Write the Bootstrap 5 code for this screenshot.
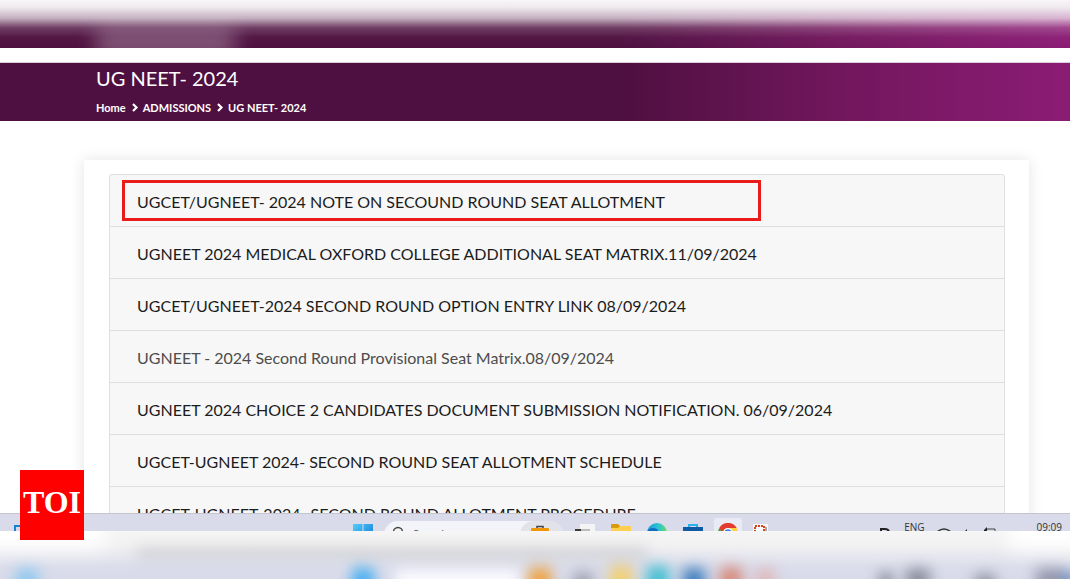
<!DOCTYPE html>
<html lang="en">
<head>
<meta charset="utf-8">
<meta name="viewport" content="width=device-width, initial-scale=1">
<title>UG NEET- 2024</title>
<link href="https://cdn.jsdelivr.net/npm/bootstrap@5.3.0/dist/css/bootstrap.min.css" rel="stylesheet">
<style>
  body { font-family: Lato, sans-serif; color: #1c1c1c; background: #fff; }
  .purple { background: linear-gradient(90deg, #4e1040 0%, #4e1040 58%, #74175f 80%, #8b1c74 100%); }
  .top-strip { height: 48px; }
  .top-strip .fade-down { background: linear-gradient(180deg, #f8f6f8 0, #efeaef 15%, #ffffffaa 38%, #ffffff30 58%, #ffffff08 78%, transparent 100%); }
  .smear { left: 9%; width: 13%; top: 28px; height: 32px; background: #ffffff48; filter: blur(10px); }
  .page-head { margin-top: 14px; padding: 3px 96px 5px; height: 59px; border-top: 1px solid #dccfd9; background-clip: padding-box; }
  .page-head h1 { font-size: 20px; line-height: 24px; }
  .crumbs { font-size: 11px; line-height: 16px; font-weight: 700; padding-top: 10px; gap: 3px; }
  .crumbs a, .crumbs span { color: #fff; text-decoration: none; }
  .content { min-height: 0; }
  .panel { margin: 39px 41px 0 84px; padding: 14px 24px 14px 25px; box-shadow: 0 0 14px #0000001c; background: #fff; }
  .notices { --bs-list-group-bg: #f7f7f7; --bs-list-group-border-color: #dfdfdf; --bs-list-group-border-radius: 3px; }
  .notices .list-group-item { padding: 15px 27px 12px; font-size: 16px; line-height: 24px; white-space: nowrap; color: #1c1c1c; }
  .notices .visited-notice { color: #4d4d4d; }
  .marker { left: 12px; top: 5px; width: 71.5%; height: 41px; border: 3px solid #e91b1b; }
  .taskbar { height: 18px; background: #dadbea; border-top: 1px solid #c3c4ce; font-family: "Open Sans", sans-serif; color: #333; }
  .taskbar svg { flex: none; }
  .lead-area { width: 33%; padding-left: 14px; }
  .apps { gap: 16px; }
  .find { width: 179px; height: 28px; margin: 7px -4px 0 -5px; background: #f3f4fa; border-radius: 14px; padding-left: 8px; }
  .find input { width: 100px; height: 20px; margin-left: 9px; font-size: 11px; line-height: 16px; padding: 4px 0 0; border: 0; background: transparent; }
  .find .work { width: 43px; height: 28px; border-radius: 14px; background: #e1e3e8; padding-left: 9px; }
  .find .work svg { display: block; }
  .find input::placeholder { color: #555; }
  .app-on { width: 28px; height: 30px; margin: 4px -5px 0 -5px; padding: 5px 4px; border-radius: 3px; background: #e9eaf4; }
  .tray { font-size: 10px; line-height: 12px; gap: 12px; padding: 7px 8px 0 0; }
  .tray time { margin-left: 28px; }
  .bottom-strip { height: 48px; }
  .toi { left: 20px; bottom: 39px; width: 64px; height: 70px; background: #f00; color: #fff; font: 700 32px/64px "Liberation Serif", serif; }
</style>
</head>
<body>
<div class="d-flex flex-column vh-100 overflow-hidden position-relative">
  <div class="top-strip purple position-relative overflow-hidden flex-shrink-0">
    <div class="smear position-absolute"></div>
    <div class="fade-down position-absolute top-0 start-0 w-100 h-100"></div>
  </div>

  <header class="page-head purple text-white flex-shrink-0">
    <h1 class="fw-normal m-0">UG NEET- 2024</h1>
    <nav class="crumbs d-flex align-items-center" aria-label="breadcrumb">
      <a href="#">Home</a>
      <svg width="11" height="10" viewBox="0 0 11 10" fill="none" stroke="#fff" stroke-width="2.200"><path d="M4 1l3.500 3.500L4 8"/></svg>
      <a href="#">ADMISSIONS</a>
      <svg width="11" height="10" viewBox="0 0 11 10" fill="none" stroke="#fff" stroke-width="2.200"><path d="M4 1l3.500 3.500L4 8"/></svg>
      <span>UG NEET- 2024</span>
    </nav>
  </header>

  <main class="content flex-fill overflow-hidden">
    <section class="panel">
      <div class="list-group notices">
        <a href="#" class="list-group-item">UGCET/UGNEET- 2024 NOTE ON SECOUND ROUND SEAT ALLOTMENT<span class="marker position-absolute"></span></a>
        <a href="#" class="list-group-item">UGNEET 2024 MEDICAL OXFORD COLLEGE ADDITIONAL SEAT MATRIX.11/09/2024</a>
        <a href="#" class="list-group-item">UGCET/UGNEET-2024 SECOND ROUND OPTION ENTRY LINK 08/09/2024</a>
        <a href="#" class="list-group-item visited-notice">UGNEET - 2024 Second Round Provisional Seat Matrix.08/09/2024</a>
        <a href="#" class="list-group-item">UGNEET 2024 CHOICE 2 CANDIDATES DOCUMENT SUBMISSION NOTIFICATION. 06/09/2024</a>
        <a href="#" class="list-group-item">UGCET-UGNEET 2024- SECOND ROUND SEAT ALLOTMENT SCHEDULE</a>
        <a href="#" class="list-group-item">UGCET-UGNEET-2024 -SECOND ROUND ALLOTMENT PROCEDURE</a>
      </div>
    </section>
  </main>

  <footer class="taskbar d-flex align-items-start overflow-hidden flex-shrink-0">
    <div class="lead-area flex-shrink-0"><svg class="d-block" width="20" height="30" viewBox="0 0 20 30"><path d="M1 30V12H20" fill="none" stroke="#1682d4" stroke-width="2"/></svg></div>
    <div class="apps d-flex align-items-start">
      <svg width="20" height="30" viewBox="0 0 20 30"><defs><linearGradient id="win" x2="1" y2="1"><stop stop-color="#52cdfb"/><stop offset="1" stop-color="#0b6fd0"/></linearGradient></defs><path fill="url(#win)" d="M0 10h9.500v9.500H0zM10.500 10H20v9.500h-9.500zM0 20.500h9.500V30H0zM10.500 20.500H20V30h-9.500z"/></svg>
      <div class="find d-flex align-items-start overflow-hidden flex-shrink-0">
        <svg width="12" height="20" viewBox="0 0 12 20"><circle cx="6" cy="11" r="4.500" fill="none" stroke="#444" stroke-width="1.500"/></svg>
        <input type="text" placeholder="Search" aria-label="Search">
        <div class="work ms-auto"><svg width="22" height="24" viewBox="0 0 22 24"><path d="M8 7V5.500h6V7" fill="none" stroke="#444" stroke-width="1.500"/><rect x="2" y="7" width="18" height="14" rx="1" fill="#f09609"/></svg></div>
      </div>
      <svg width="20" height="30" viewBox="0 0 20 30"><path fill="#f4f4f4" d="M5 10h15v13H5z"/><path fill="#3a3a3a" d="M0 15h6v9H0z"/><path fill="#bbb" d="M6 15h9v5H6z"/></svg>
      <svg width="20" height="30" viewBox="0 0 20 30"><path fill="#d99a0b" d="M0 11q0-1 1-1h6l2 2v4H0z"/><path fill="#ffd050" d="M0 14h7l2-2h10q1 0 1 1v14H0z"/></svg>
      <svg width="20" height="30" viewBox="0 0 20 30"><defs><linearGradient id="edge"><stop stop-color="#1b9ce0"/><stop offset=".6" stop-color="#2fc3d0"/><stop offset="1" stop-color="#63e05c"/></linearGradient></defs><circle cx="10" cy="19" r="10" fill="url(#edge)"/><path fill="#0f6dbd" d="M0 19q1-5 6-5 5 0 6 5v8Q2 28 0 19z"/></svg>
      <svg width="20" height="30" viewBox="0 0 20 30"><path d="M6 14v-3h8v3" fill="none" stroke="#29b2ee" stroke-width="2"/><path fill="#1059a5" d="M0 13h20v15H0z"/></svg>
      <div class="app-on flex-shrink-0"><svg class="d-block" width="20" height="20" viewBox="0 0 20 20"><circle cx="10" cy="10" r="10" fill="#ffce3e"/><path fill="#e43b31" d="M1.300 5A10 10 0 0 1 18.700 5H10a5 5 0 0 0-4.500 3L4 10z"/><path fill="#2da94f" d="M1.300 5l4.500 7.500 4 7.500A10 10 0 0 1 1.300 5z"/><circle cx="10" cy="10" r="5" fill="#fff"/><circle cx="10" cy="10" r="3.800" fill="#3d7de8"/></svg></div>
      <svg width="15" height="30" viewBox="0 0 15 30"><path fill="#f7f7f7" d="M0 10h15v18H0z"/><path d="M2 24V12h9v12" fill="none" stroke="#d8421e" stroke-width="2" stroke-dasharray="2 1"/><path fill="#aaa" d="M12 13h2v8h-2z"/></svg>
    </div>
    <div class="tray ms-auto d-flex align-items-start">
      <svg width="12" height="14" viewBox="0 0 12 14"><path d="M1 10V8h4q4 0 4 4" fill="none" stroke="#222" stroke-width="2"/></svg>
      <span>ENG</span>
      <svg width="14" height="14" viewBox="0 0 14 14"><path d="M0 11Q7 5 14 11" fill="none" stroke="#333" stroke-width="1.500"/></svg>
      <svg width="8" height="14" viewBox="0 0 8 14"><path fill="#333" d="M1 11L4 8v6H1z"/></svg>
      <svg width="14" height="14" viewBox="0 0 14 14"><path d="M3 8h9v6" fill="none" stroke="#444"/><path fill="#222" d="M1 9l3-3v8H1z"/></svg>
      <time>09:09</time>
    </div>
  </footer>

  <svg class="bottom-strip d-block w-100 flex-shrink-0" viewBox="0 0 1070 48" preserveAspectRatio="none" aria-hidden="true">
    <defs>
      <linearGradient id="haze" x2="0" y2="1"><stop stop-color="#f5f5f5"/><stop offset=".3" stop-color="#f1f1f2"/><stop offset=".75" stop-color="#dbddeb"/><stop offset="1" stop-color="#d8daea"/></linearGradient>
      <filter id="soft" filterUnits="userSpaceOnUse" x="-40" y="-30" width="1150" height="130" color-interpolation-filters="sRGB"><feGaussianBlur stdDeviation="7"/></filter>
      <filter id="softer" filterUnits="userSpaceOnUse" x="-60" y="-50" width="1190" height="160" color-interpolation-filters="sRGB"><feGaussianBlur stdDeviation="10"/></filter>
    </defs>
    <rect width="1070" height="48" fill="url(#haze)"/>
    <g filter="url(#softer)"><rect x="-40" y="-22" width="145" height="40" fill="#fff"/><rect x="1008" y="-22" width="100" height="40" fill="#fff"/></g>
    <g filter="url(#soft)">
      <rect x="137" y="17" width="510" height="10" fill="#bdbdc0" opacity=".6"/>
      <rect x="395" y="38" width="125" height="24" fill="#fafaff"/>
      <rect x="16" y="38" width="22" height="24" fill="#8cc8ee"/>
      <rect x="352" y="37" width="22" height="26" fill="#45aef0"/>
      <rect x="529" y="37" width="22" height="26" fill="#efa13a"/>
      <rect x="574" y="42" width="18" height="20" fill="#999aa8"/>
      <rect x="610" y="35" width="22" height="28" fill="#f3cf6d"/>
      <rect x="647" y="35" width="22" height="28" fill="#42bfd2"/>
      <rect x="683" y="37" width="22" height="26" fill="#3d7dbc"/>
      <rect x="720" y="36" width="22" height="26" fill="#d78979"/>
      <rect x="756" y="38" width="18" height="20" fill="#dfb5b5"/>
      <rect x="880" y="42" width="12" height="16" fill="#777987"/>
      <rect x="906" y="38" width="24" height="20" fill="#888a99"/>
      <rect x="975" y="44" width="20" height="16" fill="#888a99"/>
      <rect x="1036" y="38" width="30" height="20" fill="#9093a8"/>
      <rect x="1064" y="42" width="12" height="16" fill="#5b8bd0"/>
    </g>
  </svg>

  <div class="toi position-absolute text-center">TOI</div>
</div>
<script src="https://cdn.jsdelivr.net/npm/bootstrap@5.3.0/dist/js/bootstrap.bundle.min.js"></script>
</body>
</html>
